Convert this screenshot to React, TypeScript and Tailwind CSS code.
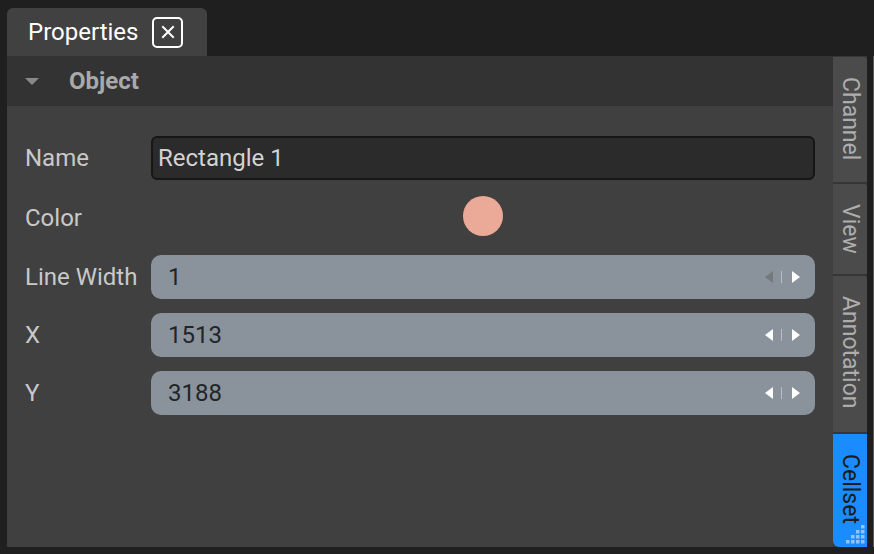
import React from "react";

function Spinner({ minDisabled }: { minDisabled?: boolean }) {
  return (
    <div className="flex items-center">
      <svg width="8" height="12" viewBox="0 0 8 12">
        <path d="M8 0 L0 6 L8 12 Z" fill={minDisabled ? "#74797e" : "#ffffff"} />
      </svg>
      <div className="ml-[8px] h-[12px] w-px bg-[#b8bec3]" />
      <svg className="ml-[10px]" width="8" height="12" viewBox="0 0 8 12">
        <path d="M0 0 L8 6 L0 12 Z" fill="#ffffff" />
      </svg>
    </div>
  );
}

function NumberField({ value, minDisabled }: { value: string; minDisabled?: boolean }) {
  return (
    <div className="flex h-[44px] flex-1 items-center justify-between rounded-[10px] bg-[#8a939b] pl-[17px] pr-[15px]">
      <span className="text-[24px] text-[#222528]">{value}</span>
      <Spinner minDisabled={minDisabled} />
    </div>
  );
}

function Row({ label, children, h = "h-[44px]" }: { label: string; children: React.ReactNode; h?: string }) {
  return (
    <div className={`flex items-center ${h}`}>
      <div className="w-[126px] shrink-0 text-[24px] text-[#c9c9c9]">{label}</div>
      {children}
    </div>
  );
}

const sideTabs = [
  { name: "Channel", h: "h-[125px]" },
  { name: "View", h: "h-[90px]" },
  { name: "Annotation", h: "h-[156px]" },
];

export default function App() {
  return (
    <div
      className="flex h-[554px] w-[874px] flex-col bg-[#1f1f1f] pl-[7px]"
      style={{ fontFamily: "Roboto, 'Liberation Sans', sans-serif" }}
    >
      {/* tab bar */}
      <div className="flex h-[56px] shrink-0 items-end">
        <div className="flex h-[48px] w-[200px] items-center rounded-t-[6px] bg-[#414141] pl-[21px]">
          <span className="text-[24px] leading-none text-white">Properties</span>
          <button className="ml-[14px] flex h-[31px] w-[31px] items-center justify-center rounded-[5px] border-2 border-white">
            <svg width="14" height="14" viewBox="0 0 14 14">
              <path d="M2 2 L12 12 M12 2 L2 12" stroke="#fff" strokeWidth="2" strokeLinecap="square" />
            </svg>
          </button>
        </div>
      </div>

      <div className="flex h-[491px] shrink-0">
        {/* main panel */}
        <div className="flex flex-1 flex-col">
          <div className="flex h-[50px] shrink-0 items-center bg-[#333333] pl-[18px]">
            <svg width="14" height="7" viewBox="0 0 14 7">
              <path d="M0 0 L14 0 L7 7 Z" fill="#8a8a8a" />
            </svg>
            <span className="ml-[30px] text-[24px] font-bold text-[#a9a9a9]">Object</span>
          </div>
          <div className="flex flex-1 flex-col gap-[14px] bg-[#404040] pl-[18px] pr-[18px] pt-[30px]">
            <Row label="Name">
              <div className="flex h-[44px] flex-1 items-center rounded-[6px] border-2 border-[#161616] bg-[#2b2b2b] pl-[5px]">
                <span className="text-[24px] text-[#d2d2d2]">Rectangle 1</span>
              </div>
            </Row>
            <Row label="Color" h="h-[47px]">
              <div className="flex flex-1 justify-center pb-[3px]">
                <div className="h-[40px] w-[40px] rounded-full bg-[#eba998]" />
              </div>
            </Row>
            <Row label="Line Width">
              <NumberField value="1" minDisabled />
            </Row>
            <Row label="X">
              <NumberField value="1513" />
            </Row>
            <Row label="Y">
              <NumberField value="3188" />
            </Row>
          </div>
        </div>

        {/* side tabs */}
        <div className="flex w-[34px] shrink-0 flex-col gap-[2px] bg-[#363636] pt-px">
          {sideTabs.map((t) => (
            <div
              key={t.name}
              className={`flex ${t.h} shrink-0 justify-center rounded-tr-[3px] bg-[#4b4b4b] pt-[20px]`}
            >
              <span className="text-[23px] leading-none text-[#adadad]" style={{ writingMode: "vertical-rl" }}>
                {t.name}
              </span>
            </div>
          ))}
          <div className="relative flex flex-1 justify-center rounded-bl-[6px] bg-[#1a8cff] pt-[20px]">
            <span className="text-[23px] leading-none text-[#1b1b1b]" style={{ writingMode: "vertical-rl" }}>
              Cellset
            </span>
            <svg className="absolute bottom-[3px] right-[2px]" width="19" height="19" viewBox="0 0 19 19">
              {[
                [15, 0],
                [10, 5], [15, 5],
                [5, 10], [10, 10], [15, 10],
                [0, 15], [5, 15], [10, 15], [15, 15],
              ].map(([x, y]) => (
                <rect key={`${x}-${y}`} x={x} y={y} width="3.5" height="3.5" fill="#8fc4ff" />
              ))}
            </svg>
          </div>
        </div>
        <div className="w-[7px] shrink-0 border-r border-[#5a5a5a] bg-[#1f1f1f]" />
      </div>
      <div className="h-[7px] shrink-0" />
    </div>
  );
}
